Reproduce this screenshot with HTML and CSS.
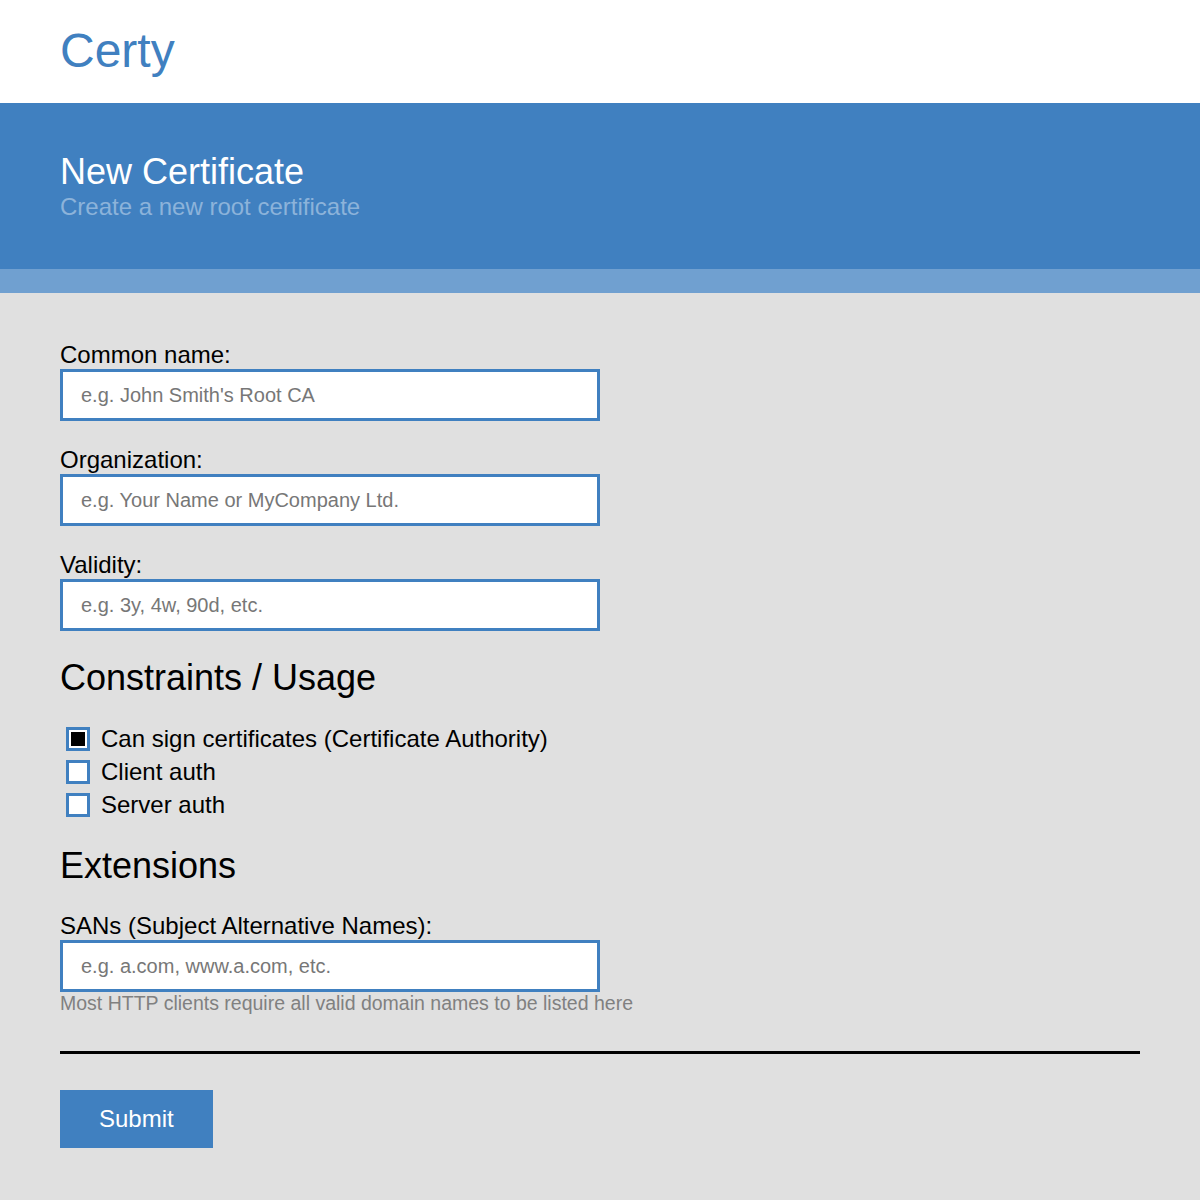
FILE: index.html
```html
<!DOCTYPE html>
<html lang="en">
<head>
<meta charset="utf-8">
<title>Certy - New Certificate</title>
<link rel="stylesheet" href="styles.css">
</head>
<body>
<header class="topbar">
  <div class="brand">Certy</div>
</header>
<section class="banner">
  <h1 class="banner-title">New Certificate</h1>
  <p class="banner-sub">Create a new root certificate</p>
</section>
<div class="stripe"></div>
<main class="content">
  <form class="form">
    <div class="field">
      <label class="label" for="cn">Common name:</label>
      <input class="input" id="cn" type="text" placeholder="e.g. John Smith's Root CA">
    </div>
    <div class="field">
      <label class="label" for="org">Organization:</label>
      <input class="input" id="org" type="text" placeholder="e.g. Your Name or MyCompany Ltd.">
    </div>
    <div class="field">
      <label class="label" for="validity">Validity:</label>
      <input class="input" id="validity" type="text" placeholder="e.g. 3y, 4w, 90d, etc.">
    </div>

    <h2 class="section-title">Constraints / Usage</h2>
    <div class="checks">
      <label class="check"><input class="box" type="checkbox" checked><span>Can sign certificates (Certificate Authority)</span></label>
      <label class="check"><input class="box" type="checkbox"><span>Client auth</span></label>
      <label class="check"><input class="box" type="checkbox"><span>Server auth</span></label>
    </div>

    <h2 class="section-title section-title-2">Extensions</h2>
    <div class="field">
      <label class="label" for="sans">SANs (Subject Alternative Names):</label>
      <input class="input" id="sans" type="text" placeholder="e.g. a.com, www.a.com, etc.">
      <div class="help">Most HTTP clients require all valid domain names to be listed here</div>
    </div>

    <hr class="rule">
    <button class="submit" type="button">Submit</button>
  </form>
</main>
</body>
</html>
```
FILE: styles.css
```css
* { box-sizing: border-box; }

html, body {
  margin: 0;
  padding: 0;
}

body {
  background: #e0e0e0;
  font-family: "Liberation Sans", Arial, sans-serif;
  color: #000;
  min-height: 1200px;
}

.topbar {
  background: #fff;
  padding: 27px 60px 28px;
  height: 103px;
}

.brand {
  font-size: 48px;
  line-height: 48px;
  color: #4080c0;
}

.banner {
  background: #4080c0;
  height: 166px;
  padding: 51px 60px 0;
}

.banner-title {
  margin: 0;
  font-size: 36px;
  line-height: 36px;
  font-weight: normal;
  color: #fff;
}

.banner-sub {
  margin: 5px 0 0;
  font-size: 24px;
  line-height: 24px;
  color: #8cb3da;
}

.stripe {
  height: 24px;
  background: #70a0d0;
}

.content {
  padding: 48px 60px 52px;
}

.form {
  display: flex;
  flex-direction: column;
  align-items: flex-start;
}

.field {
  display: flex;
  flex-direction: column;
  align-items: flex-start;
}

.field + .field {
  margin-top: 25px;
}

.label {
  font-size: 24px;
  line-height: 28px;
}

.input {
  width: 540px;
  height: 52px;
  border: 3px solid #4080c0;
  background: #fff;
  padding: 0 18px;
  font-family: "Liberation Sans", Arial, sans-serif;
  font-size: 20px;
  color: #000;
  outline: none;
  margin: 0;
}

.input::placeholder {
  color: #777;
  opacity: 1;
}

.section-title {
  margin: 26px 0 24px;
  font-size: 36px;
  line-height: 41px;
  font-weight: normal;
}

.section-title-2 {
  margin-top: 24px;
  margin-bottom: 26px;
}

.checks {
  display: flex;
  flex-direction: column;
}

.check {
  display: flex;
  align-items: center;
  height: 33px;
  font-size: 24px;
  padding-left: 6px;
}

.box {
  appearance: none;
  -webkit-appearance: none;
  width: 24px;
  height: 24px;
  margin: 0 11px 0 0;
  border: 3px solid #4080c0;
  background: #fff;
  flex: none;
}

.box:checked {
  background: #000;
  box-shadow: inset 0 0 0 2px #fff;
}

.help {
  font-size: 19.5px;
  line-height: 23px;
  color: #808080;
}

.rule {
  align-self: stretch;
  margin: 36px 0 36px;
  border: 0;
  height: 3px;
  background: #000;
}

.submit {
  background: #4080c0;
  color: #fff;
  border: 0;
  height: 58px;
  padding: 0 39px;
  font-family: "Liberation Sans", Arial, sans-serif;
  font-size: 24px;
  margin: 0;
  cursor: pointer;
}
```
